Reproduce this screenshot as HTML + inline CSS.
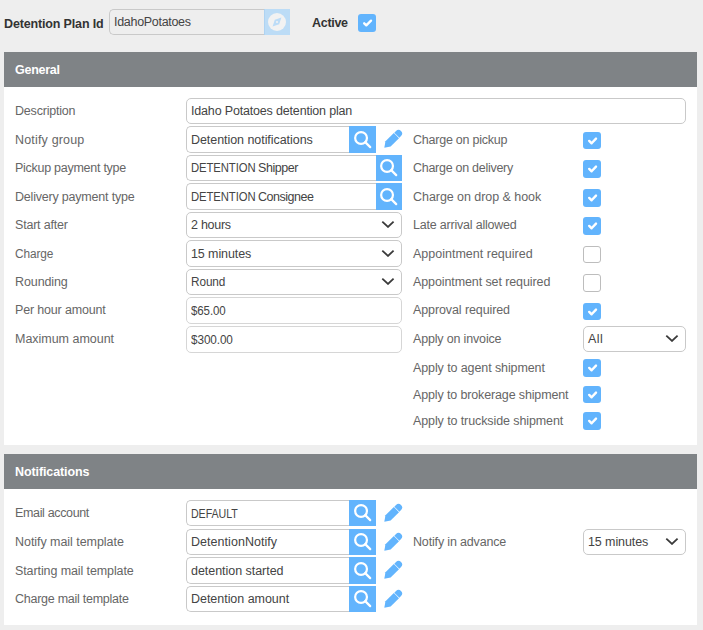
<!DOCTYPE html>
<html><head><meta charset="utf-8"><style>
html,body{margin:0;padding:0}
body{width:703px;height:630px;background:#eeeeee;position:relative;overflow:hidden;font-family:"Liberation Sans",sans-serif;font-size:12.5px}
.a{position:absolute;box-sizing:content-box}
.t{position:absolute;white-space:nowrap;line-height:16px}
svg{display:block}
</style></head><body>
<div class="t" style="left:4px;top:16px;color:#333;font-weight:bold;font-size:12.5px;letter-spacing:-0.15px;">Detention Plan Id</div>
<div class="a" style="left:109px;top:9px;width:155px;height:24px;border:1px solid #c9c9c9;border-right:none;border-radius:5px 0 0 5px;background:#eee"></div>
<div class="t" style="left:114px;top:14px;color:#444444;font-size:12.5px;letter-spacing:-0.3px;">IdahoPotatoes</div>
<div class="a" style="left:264px;top:9px;width:26px;height:26px;background:#bcdcf6;box-shadow:inset 1px 0 0 #aed3f2"><svg width="26" height="26" viewBox="0 0 26 26"><circle cx="13" cy="13" r="9" fill="#f2f2f2"/><path d="M17.4 8.6 L15.2 15.2 L8.6 17.4 L10.8 10.8 Z" fill="#bcdcf7"/><circle cx="13" cy="13" r="1.1" fill="#f2f2f2"/></svg></div>
<div class="t" style="left:312px;top:15px;color:#333;font-weight:bold;font-size:12.5px;letter-spacing:-0.3px;">Active</div>
<div class="a" style="left:358px;top:14px;width:18px;height:18px;background:#62b4fd;border-radius:3px"><svg width="18" height="18" viewBox="0 0 18 18"><polyline points="6.2,9.3 8.3,11.3 13.0,6.7" fill="none" stroke="#fff" stroke-width="2.4" stroke-linecap="round" stroke-linejoin="round"/></svg></div>
<div class="a" style="left:4px;top:52px;width:693px;height:393px;background:#fff"></div>
<div class="a" style="left:4px;top:52px;width:693px;height:35px;background:#7f8386"></div>
<div class="t" style="left:15px;top:62px;color:#fff;font-weight:bold;font-size:12.5px;letter-spacing:-0.267px;">General</div>
<div class="a" style="left:4px;top:454px;width:693px;height:171px;background:#fff"></div>
<div class="a" style="left:4px;top:454px;width:693px;height:35px;background:#7f8386"></div>
<div class="t" style="left:15px;top:464px;color:#fff;font-weight:bold;font-size:12.5px;letter-spacing:-0.1px;">Notifications</div>
<div class="t" style="left:15px;top:103px;color:#666666;font-size:12.5px;letter-spacing:-0.2px;">Description</div>
<div class="t" style="left:15px;top:132px;color:#666666;font-size:12.5px;letter-spacing:0.173px;">Notify group</div>
<div class="t" style="left:15px;top:160px;color:#666666;font-size:12.5px;letter-spacing:-0.267px;">Pickup payment type</div>
<div class="t" style="left:15px;top:189px;color:#666666;font-size:12.5px;letter-spacing:-0.2px;">Delivery payment type</div>
<div class="t" style="left:15px;top:217px;color:#666666;font-size:12.5px;letter-spacing:-0.2px;">Start after</div>
<div class="t" style="left:15px;top:246px;color:#666666;font-size:12.5px;letter-spacing:-0.1px;transform:scaleX(0.9494);transform-origin:0 0;">Charge</div>
<div class="t" style="left:15px;top:274px;color:#666666;font-size:12.5px;letter-spacing:-0.1px;">Rounding</div>
<div class="t" style="left:15px;top:302px;color:#666666;font-size:12.5px;letter-spacing:-0.171px;">Per hour amount</div>
<div class="t" style="left:15px;top:331px;color:#666666;font-size:12.5px;letter-spacing:-0.023px;">Maximum amount</div>
<div class="a" style="left:186px;top:98px;width:498px;height:24px;border:1px solid #c9c9c9;border-radius:5px;background:#fff"></div>
<div class="t" style="left:191px;top:103px;color:#444444;font-size:12.5px;letter-spacing:-0.171px;">Idaho Potatoes detention plan</div>
<div class="a" style="left:186px;top:126px;width:162px;height:25px;border:1px solid #c9c9c9;border-right:none;border-radius:5px 0 0 5px;background:#fff"></div>
<div class="t" style="left:191px;top:132px;color:#444444;font-size:12.5px;letter-spacing:-0.055px;">Detention notifications</div>
<div class="a" style="left:349px;top:126px;width:27px;height:27px;background:#62b4fd"><div class="a" style="left:4.5px;top:4.5px;width:18px;height:18px"><svg width="18" height="18" viewBox="0 0 18 18"><circle cx="7.05" cy="7.0" r="5.9" fill="none" stroke="#fff" stroke-width="2.2"/><line x1="11.2" y1="11.15" x2="16.2" y2="16.15" stroke="#fff" stroke-width="2.2" stroke-linecap="round"/></svg></div></div>
<div class="a" style="left:382px;top:128px;width:22px;height:22px"><svg width="22" height="22" viewBox="0 0 22 22"><g transform="translate(11 11) rotate(-45)" fill="#62b4fd"><path d="M-12.3 0 L-7.0 -3.65 L4.85 -3.65 L4.85 3.65 L-7.0 3.65 Z"/><path d="M5.45 -3.55 L7.8 -3.55 A3.55 3.55 0 0 1 7.8 3.55 L5.45 3.55 Z"/></g></svg></div>
<div class="a" style="left:186px;top:155px;width:189px;height:24px;border:1px solid #c9c9c9;border-right:none;border-radius:5px 0 0 5px;background:#fff"></div>
<div class="t" style="left:191px;top:160px;color:#444444;font-size:12.5px;letter-spacing:-0.1px;transform:scaleX(0.9044);transform-origin:0 0;">DETENTION</div>
<div class="t" style="left:258px;top:160px;color:#444444;font-size:12.5px;letter-spacing:-0.433px;">Shipper</div>
<div class="a" style="left:376px;top:155px;width:26px;height:26px;background:#62b4fd"><div class="a" style="left:4.0px;top:4.0px;width:18px;height:18px"><svg width="18" height="18" viewBox="0 0 18 18"><circle cx="7.05" cy="7.0" r="5.9" fill="none" stroke="#fff" stroke-width="2.2"/><line x1="11.2" y1="11.15" x2="16.2" y2="16.15" stroke="#fff" stroke-width="2.2" stroke-linecap="round"/></svg></div></div>
<div class="a" style="left:186px;top:183px;width:189px;height:25px;border:1px solid #c9c9c9;border-right:none;border-radius:5px 0 0 5px;background:#fff"></div>
<div class="t" style="left:191px;top:189px;color:#444444;font-size:12.5px;letter-spacing:-0.1px;transform:scaleX(0.9044);transform-origin:0 0;">DETENTION</div>
<div class="t" style="left:258px;top:189px;color:#444444;font-size:12.5px;letter-spacing:-0.475px;">Consignee</div>
<div class="a" style="left:376px;top:183px;width:26px;height:27px;background:#62b4fd"><div class="a" style="left:4.0px;top:4.5px;width:18px;height:18px"><svg width="18" height="18" viewBox="0 0 18 18"><circle cx="7.05" cy="7.0" r="5.9" fill="none" stroke="#fff" stroke-width="2.2"/><line x1="11.2" y1="11.15" x2="16.2" y2="16.15" stroke="#fff" stroke-width="2.2" stroke-linecap="round"/></svg></div></div>
<div class="a" style="left:186px;top:212px;width:214px;height:24px;border:1px solid #c9c9c9;border-radius:5px;background:#fff"></div>
<div class="t" style="left:191px;top:217px;color:#444444;font-size:12.5px;letter-spacing:-0.267px;">2 hours</div>
<div class="a" style="left:381px;top:220.0px;width:14px;height:8px"><svg width="14" height="8" viewBox="0 0 14 8"><polyline points="1.3,1.6 7,6.9 12.6,1.6" fill="none" stroke="#3a3a3a" stroke-width="1.8"/></svg></div>
<div class="a" style="left:186px;top:240px;width:214px;height:25px;border:1px solid #c9c9c9;border-radius:5px;background:#fff"></div>
<div class="t" style="left:191px;top:246px;color:#444444;font-size:12.5px;letter-spacing:-0.1px;">15 minutes</div>
<div class="a" style="left:381px;top:248.5px;width:14px;height:8px"><svg width="14" height="8" viewBox="0 0 14 8"><polyline points="1.3,1.6 7,6.9 12.6,1.6" fill="none" stroke="#3a3a3a" stroke-width="1.8"/></svg></div>
<div class="a" style="left:186px;top:269px;width:214px;height:24px;border:1px solid #c9c9c9;border-radius:5px;background:#fff"></div>
<div class="t" style="left:191px;top:274px;color:#444444;font-size:12.5px;letter-spacing:-0.1px;transform:scaleX(0.9437);transform-origin:0 0;">Round</div>
<div class="a" style="left:381px;top:277.0px;width:14px;height:8px"><svg width="14" height="8" viewBox="0 0 14 8"><polyline points="1.3,1.6 7,6.9 12.6,1.6" fill="none" stroke="#3a3a3a" stroke-width="1.8"/></svg></div>
<div class="a" style="left:186px;top:297px;width:214px;height:25px;border:1px solid #d6d6d6;border-radius:5px;background:#fff"></div>
<div class="t" style="left:191px;top:303px;color:#444444;font-size:12.5px;letter-spacing:-0.1px;transform:scaleX(0.92);transform-origin:0 0;">$65.00</div>
<div class="a" style="left:186px;top:326px;width:214px;height:25px;border:1px solid #d6d6d6;border-radius:5px;background:#fff"></div>
<div class="t" style="left:191px;top:332px;color:#444444;font-size:12.5px;letter-spacing:-0.1px;transform:scaleX(0.94);transform-origin:0 0;">$300.00</div>
<div class="t" style="left:413px;top:132px;color:#666666;font-size:12.5px;letter-spacing:-0.233px;">Charge on pickup</div>
<div class="a" style="left:583px;top:132px;width:18px;height:17px;background:#62b4fd;border-radius:3px"><svg width="18" height="17" viewBox="0 0 18 17"><polyline points="6.2,8.9 8.6,11.3 13.0,6.6" fill="none" stroke="#fff" stroke-width="2.4" stroke-linecap="round" stroke-linejoin="round"/></svg></div>
<div class="t" style="left:413px;top:160px;color:#666666;font-size:12.5px;letter-spacing:-0.276px;">Charge on delivery</div>
<div class="a" style="left:583px;top:160px;width:18px;height:18px;background:#62b4fd;border-radius:3px"><svg width="18" height="17" viewBox="0 0 18 17"><polyline points="6.2,8.9 8.6,11.3 13.0,6.6" fill="none" stroke="#fff" stroke-width="2.4" stroke-linecap="round" stroke-linejoin="round"/></svg></div>
<div class="t" style="left:413px;top:189px;color:#666666;font-size:12.5px;letter-spacing:-0.05px;">Charge on drop &amp; hook</div>
<div class="a" style="left:583px;top:189px;width:18px;height:18px;background:#62b4fd;border-radius:3px"><svg width="18" height="17" viewBox="0 0 18 17"><polyline points="6.2,8.9 8.6,11.3 13.0,6.6" fill="none" stroke="#fff" stroke-width="2.4" stroke-linecap="round" stroke-linejoin="round"/></svg></div>
<div class="t" style="left:413px;top:217px;color:#666666;font-size:12.5px;letter-spacing:-0.205px;">Late arrival allowed</div>
<div class="a" style="left:583px;top:217px;width:18px;height:18px;background:#62b4fd;border-radius:3px"><svg width="18" height="17" viewBox="0 0 18 17"><polyline points="6.2,8.9 8.6,11.3 13.0,6.6" fill="none" stroke="#fff" stroke-width="2.4" stroke-linecap="round" stroke-linejoin="round"/></svg></div>
<div class="t" style="left:413px;top:246px;color:#666666;font-size:12.5px;letter-spacing:0.005px;">Appointment required</div>
<div class="a" style="left:583px;top:246px;width:16px;height:15px;border:1px solid #bdbdbd;border-radius:3px;background:#fff"></div>
<div class="t" style="left:413px;top:274px;color:#666666;font-size:12.5px;letter-spacing:-0.1px;">Appointment set required</div>
<div class="a" style="left:583px;top:274px;width:16px;height:16px;border:1px solid #bdbdbd;border-radius:3px;background:#fff"></div>
<div class="t" style="left:413px;top:302px;color:#666666;font-size:12.5px;letter-spacing:-0.1px;">Approval required</div>
<div class="a" style="left:583px;top:303px;width:18px;height:17px;background:#62b4fd;border-radius:3px"><svg width="18" height="17" viewBox="0 0 18 17"><polyline points="6.2,8.9 8.6,11.3 13.0,6.6" fill="none" stroke="#fff" stroke-width="2.4" stroke-linecap="round" stroke-linejoin="round"/></svg></div>
<div class="t" style="left:413px;top:331px;color:#666666;font-size:12.5px;letter-spacing:-0.167px;">Apply on invoice</div>
<div class="a" style="left:583px;top:326px;width:101px;height:24px;border:1px solid #c9c9c9;border-radius:5px;background:#fff"></div>
<div class="t" style="left:588px;top:331px;color:#444444;font-size:12.5px;letter-spacing:0.4px;">All</div>
<div class="a" style="left:665px;top:334.0px;width:14px;height:8px"><svg width="14" height="8" viewBox="0 0 14 8"><polyline points="1.3,1.6 7,6.9 12.6,1.6" fill="none" stroke="#3a3a3a" stroke-width="1.8"/></svg></div>
<div class="t" style="left:413px;top:360px;color:#666666;font-size:12.5px;letter-spacing:-0.1px;">Apply to agent shipment</div>
<div class="a" style="left:583px;top:359px;width:18px;height:18px;background:#62b4fd;border-radius:3px"><svg width="18" height="17" viewBox="0 0 18 17"><polyline points="6.2,8.9 8.6,11.3 13.0,6.6" fill="none" stroke="#fff" stroke-width="2.4" stroke-linecap="round" stroke-linejoin="round"/></svg></div>
<div class="t" style="left:413px;top:387px;color:#666666;font-size:12.5px;letter-spacing:-0.138px;">Apply to brokerage shipment</div>
<div class="a" style="left:583px;top:386px;width:18px;height:17px;background:#62b4fd;border-radius:3px"><svg width="18" height="17" viewBox="0 0 18 17"><polyline points="6.2,8.9 8.6,11.3 13.0,6.6" fill="none" stroke="#fff" stroke-width="2.4" stroke-linecap="round" stroke-linejoin="round"/></svg></div>
<div class="t" style="left:413px;top:413px;color:#666666;font-size:12.5px;letter-spacing:-0.1px;">Apply to truckside shipment</div>
<div class="a" style="left:583px;top:412px;width:18px;height:18px;background:#62b4fd;border-radius:3px"><svg width="18" height="17" viewBox="0 0 18 17"><polyline points="6.2,8.9 8.6,11.3 13.0,6.6" fill="none" stroke="#fff" stroke-width="2.4" stroke-linecap="round" stroke-linejoin="round"/></svg></div>
<div class="t" style="left:15px;top:505px;color:#666666;font-size:12.5px;letter-spacing:-0.35px;">Email account</div>
<div class="a" style="left:186px;top:500px;width:162px;height:24px;border:1px solid #c9c9c9;border-right:none;border-radius:5px 0 0 5px;background:#fff"></div>
<div class="t" style="left:191px;top:506px;color:#444444;font-size:12.5px;letter-spacing:-0.1px;transform:scaleX(0.8532);transform-origin:0 0;">DEFAULT</div>
<div class="a" style="left:349px;top:500px;width:27px;height:26px;background:#62b4fd"><div class="a" style="left:4.5px;top:4.0px;width:18px;height:18px"><svg width="18" height="18" viewBox="0 0 18 18"><circle cx="7.05" cy="7.0" r="5.9" fill="none" stroke="#fff" stroke-width="2.2"/><line x1="11.2" y1="11.15" x2="16.2" y2="16.15" stroke="#fff" stroke-width="2.2" stroke-linecap="round"/></svg></div></div>
<div class="a" style="left:382px;top:502px;width:22px;height:22px"><svg width="22" height="22" viewBox="0 0 22 22"><g transform="translate(11 11) rotate(-45)" fill="#62b4fd"><path d="M-12.3 0 L-7.0 -3.65 L4.85 -3.65 L4.85 3.65 L-7.0 3.65 Z"/><path d="M5.45 -3.55 L7.8 -3.55 A3.55 3.55 0 0 1 7.8 3.55 L5.45 3.55 Z"/></g></svg></div>
<div class="t" style="left:15px;top:534px;color:#666666;font-size:12.5px;letter-spacing:-0.047px;">Notify mail template</div>
<div class="a" style="left:186px;top:529px;width:162px;height:24px;border:1px solid #c9c9c9;border-right:none;border-radius:5px 0 0 5px;background:#fff"></div>
<div class="t" style="left:191px;top:534px;color:#444444;font-size:12.5px;letter-spacing:0.043px;">DetentionNotify</div>
<div class="a" style="left:349px;top:529px;width:27px;height:26px;background:#62b4fd"><div class="a" style="left:4.5px;top:4.0px;width:18px;height:18px"><svg width="18" height="18" viewBox="0 0 18 18"><circle cx="7.05" cy="7.0" r="5.9" fill="none" stroke="#fff" stroke-width="2.2"/><line x1="11.2" y1="11.15" x2="16.2" y2="16.15" stroke="#fff" stroke-width="2.2" stroke-linecap="round"/></svg></div></div>
<div class="a" style="left:382px;top:531px;width:22px;height:22px"><svg width="22" height="22" viewBox="0 0 22 22"><g transform="translate(11 11) rotate(-45)" fill="#62b4fd"><path d="M-12.3 0 L-7.0 -3.65 L4.85 -3.65 L4.85 3.65 L-7.0 3.65 Z"/><path d="M5.45 -3.55 L7.8 -3.55 A3.55 3.55 0 0 1 7.8 3.55 L5.45 3.55 Z"/></g></svg></div>
<div class="t" style="left:15px;top:563px;color:#666666;font-size:12.5px;letter-spacing:-0.1px;">Starting mail template</div>
<div class="a" style="left:186px;top:557px;width:162px;height:25px;border:1px solid #c9c9c9;border-right:none;border-radius:5px 0 0 5px;background:#fff"></div>
<div class="t" style="left:191px;top:563px;color:#444444;font-size:12.5px;letter-spacing:-0.038px;">detention started</div>
<div class="a" style="left:349px;top:557px;width:27px;height:27px;background:#62b4fd"><div class="a" style="left:4.5px;top:4.5px;width:18px;height:18px"><svg width="18" height="18" viewBox="0 0 18 18"><circle cx="7.05" cy="7.0" r="5.9" fill="none" stroke="#fff" stroke-width="2.2"/><line x1="11.2" y1="11.15" x2="16.2" y2="16.15" stroke="#fff" stroke-width="2.2" stroke-linecap="round"/></svg></div></div>
<div class="a" style="left:382px;top:559px;width:22px;height:22px"><svg width="22" height="22" viewBox="0 0 22 22"><g transform="translate(11 11) rotate(-45)" fill="#62b4fd"><path d="M-12.3 0 L-7.0 -3.65 L4.85 -3.65 L4.85 3.65 L-7.0 3.65 Z"/><path d="M5.45 -3.55 L7.8 -3.55 A3.55 3.55 0 0 1 7.8 3.55 L5.45 3.55 Z"/></g></svg></div>
<div class="t" style="left:15px;top:591px;color:#666666;font-size:12.5px;letter-spacing:-0.258px;">Charge mail template</div>
<div class="a" style="left:186px;top:586px;width:162px;height:24px;border:1px solid #c9c9c9;border-right:none;border-radius:5px 0 0 5px;background:#fff"></div>
<div class="t" style="left:191px;top:591px;color:#444444;font-size:12.5px;letter-spacing:-0.033px;">Detention amount</div>
<div class="a" style="left:349px;top:586px;width:27px;height:26px;background:#62b4fd"><div class="a" style="left:4.5px;top:4.0px;width:18px;height:18px"><svg width="18" height="18" viewBox="0 0 18 18"><circle cx="7.05" cy="7.0" r="5.9" fill="none" stroke="#fff" stroke-width="2.2"/><line x1="11.2" y1="11.15" x2="16.2" y2="16.15" stroke="#fff" stroke-width="2.2" stroke-linecap="round"/></svg></div></div>
<div class="a" style="left:382px;top:588px;width:22px;height:22px"><svg width="22" height="22" viewBox="0 0 22 22"><g transform="translate(11 11) rotate(-45)" fill="#62b4fd"><path d="M-12.3 0 L-7.0 -3.65 L4.85 -3.65 L4.85 3.65 L-7.0 3.65 Z"/><path d="M5.45 -3.55 L7.8 -3.55 A3.55 3.55 0 0 1 7.8 3.55 L5.45 3.55 Z"/></g></svg></div>
<div class="t" style="left:413px;top:534px;color:#666666;font-size:12.5px;letter-spacing:-0.162px;">Notify in advance</div>
<div class="a" style="left:583px;top:529px;width:101px;height:24px;border:1px solid #c9c9c9;border-radius:5px;background:#fff"></div>
<div class="t" style="left:588px;top:534px;color:#444444;font-size:12.5px;letter-spacing:-0.1px;">15 minutes</div>
<div class="a" style="left:665px;top:537.0px;width:14px;height:8px"><svg width="14" height="8" viewBox="0 0 14 8"><polyline points="1.3,1.6 7,6.9 12.6,1.6" fill="none" stroke="#3a3a3a" stroke-width="1.8"/></svg></div>
</body></html>
